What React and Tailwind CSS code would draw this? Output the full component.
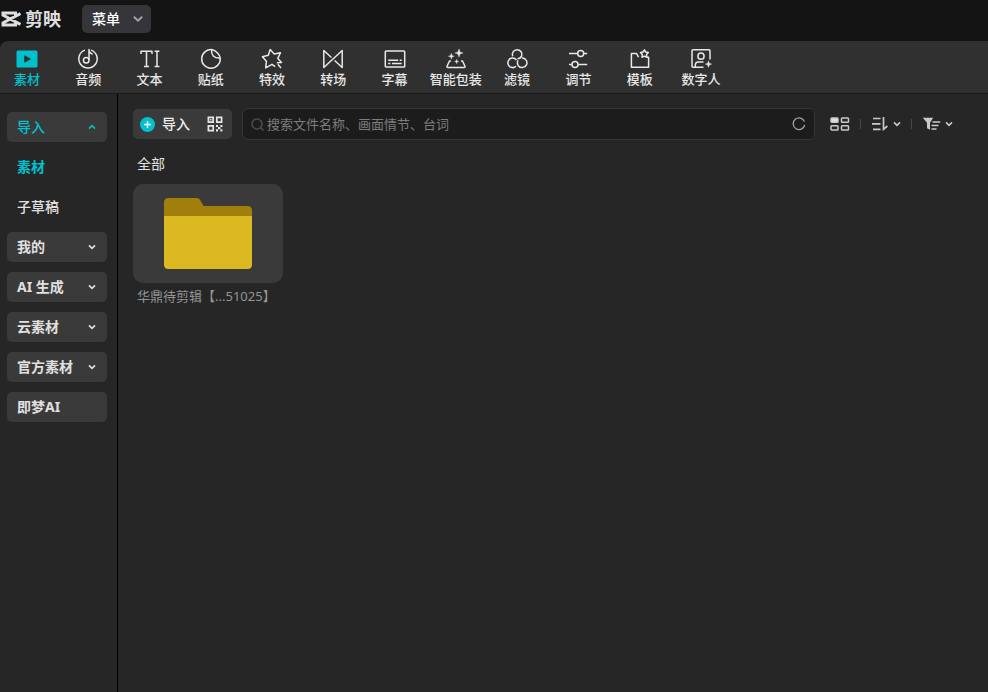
import React from "react";

function Icon({ size = 22, className = "", children }) {
  return (
    <svg
      width={size}
      height={size}
      viewBox={`0 0 ${size} ${size}`}
      fill="none"
      stroke="currentColor"
      strokeWidth="1.5"
      strokeLinejoin="round"
      className={`shrink-0 ${className}`}
      aria-hidden="true"
    >
      {children}
    </svg>
  );
}

function Chevron({ up = false, className = "" }) {
  return (
    <svg width="8" height="6" viewBox="0 0 8 6" fill="none" stroke="currentColor" strokeWidth="1.6" className={`shrink-0 ${className}`} aria-hidden="true">
      <path d={up ? "M1 4.6 4 1.7l3 2.9" : "M1 1.4l3 2.9 3-2.9"} />
    </svg>
  );
}

const TABS = [
  {
    label: "素材",
    active: true,
    icon: (
      <>
        <rect x="0.5" y="2.5" width="21" height="17" rx="1.5" fill="currentColor" stroke="none" />
        <path d="M8.7 7.8v6.4l5.8-3.2z" fill="#303030" stroke="#303030" strokeWidth="0.8" />
      </>
    ),
  },
  {
    label: "音频",
    icon: (
      <>
        <path d="M8 2.1A9.2 9.2 0 1 0 14 2.1" />
        <circle cx="9.2" cy="12.2" r="2.8" />
        <path d="M12 12.2V1.6c0 2.6 1 3.9 3.6 4.6" />
      </>
    ),
  },
  {
    label: "文本",
    icon: (
      <path d="M2 6V3.3h11V6M7.5 3.3v15M5 18.6h5M15.6 3.3h4.8M15.6 18.6h4.8M18 3.3v15.3" />
    ),
  },
  {
    label: "贴纸",
    icon: (
      <>
        <path d="M12.5 1.7A9.3 9.3 0 1 0 20.2 9.8c-.8-3.4-4.3-7.2-7.7-8.1z" />
        <path d="M11.6 1.7c-.6 5 2.2 8.7 8.5 8.4" />
      </>
    ),
  },
  {
    label: "特效",
    icon: (
      <>
        <path d="M14.2 18.6l-3.2-2.3-6.300 3.500.7-6.500-4-4.500 5.900-1.600L9.200 1.600l4 4.300 6.300-1.200-2.700 5.700 3.700 4.100-4.700.2" />
        <path d="M16.800 16.200l3.200 3.800" />
      </>
    ),
  },
  {
    label: "转场",
    icon: (
      <path d="M9.4 9.5 1.8 2.5v17L20.2 2.5v17l-7.6-7" />
    ),
  },
  {
    label: "字幕",
    icon: (
      <>
        <rect x="1.3" y="3" width="19.4" height="16" rx="0.8" />
        <path d="M4.2 12.2h10M15.7 12.2h2M4.2 15.4h2.2M8 15.4h9.7" />
      </>
    ),
  },
  {
    label: "智能包装",
    icon: (
      <>
        <path d="M6 13H4.500L2 18.200c-.3.800.1 1.300.9 1.300h16.200c.8 0 1.200-.5.9-1.300L17.500 13H16" />
        <path d="M14 0.800l1.100 3.100L18.200 5l-3.100 1.100L14 9.200l-1.100-3.100L9.800 5l3.100-1.100zM6.300 5.200l.8 2.200 2.200.8-2.200.8-.8 2.200-.8-2.200-2.200-.8 2.200-.8zM11.700 11.300l.6 1.600 1.600.6-1.600.6-.6 1.600-.6-1.600-1.600-.6 1.600-.6z" fill="currentColor" strokeWidth="0.3" />
      </>
    ),
  },
  {
    label: "滤镜",
    icon: (
      <>
        <path d="M6.700 8.300a4.800 4.800 0 1 1 9-.4c-.9 2-2.300 2.800-4.200 2.900" />
        <path d="M15.900 10a4.800 4.800 0 1 1-3.600 7.700c-1.200-1.900-1.200-3.500-.3-5.300" />
        <path d="M10 18.300a4.800 4.800 0 1 1-4.200-8.200c2.300-.2 3.800.6 4.700 2.100" />
      </>
    ),
  },
  {
    label: "调节",
    icon: (
      <>
        <circle cx="13.7" cy="5.5" r="3" />
        <circle cx="8" cy="16.5" r="3" />
        <path d="M2 5.5h8.7M16.7 5.5h3.5M2 16.5h3M11 16.5h9.2" />
      </>
    ),
  },
  {
    label: "模板",
    icon: (
      <>
        <path d="M9.5 9.2 7.6 5.5H2.4v13.8h17.2V9.2h-2.1" />
        <path d="M15.4 1.8l1.3 2.2 2.6.5-1.8 2 .3 2.7-2.4-1.1L13 9.2l.3-2.7-1.8-2 2.6-.5z" />
      </>
    ),
  },
  {
    label: "数字人",
    icon: (
      <>
        <path d="M20 11.5V2.7c0-.6-.4-1-1-1H3c-.6 0-1 .4-1 1v15.6c0 .6.4 1 1 1h10.5" />
        <circle cx="11" cy="8.2" r="3.1" />
        <path d="M5.3 19v-2.2c.2-1.7 1.2-2.8 2.8-2.8h5.4" />
        <path d="M18.5 12.8l.9 2.4 2.4.9-2.4.9-.9 2.4-.9-2.4-2.4-.9 2.4-.9z" fill="currentColor" strokeWidth="0.3" />
      </>
    ),
  },
];

const GROUPS = [
  { label: "我的", expandable: true },
  { label: "AI 生成", expandable: true },
  { label: "云素材", expandable: true },
  { label: "官方素材", expandable: true },
  { label: "即梦AI", expandable: false },
];

function Header() {
  return (
    <header className="flex h-[41px] shrink-0 items-start gap-[21px] pt-[5px]">
      <div className="flex h-7 items-center gap-1 text-[#dedede]">
        <svg width="21" height="18" viewBox="0 0 21 18" fill="none" stroke="currentColor" strokeWidth="3" className="shrink-0" aria-hidden="true">
          <path d="M20.500 3.600 3 13v2h12.500v-3M20.500 14.400 3 5V3h12.500v3" />
        </svg>
        <span className="text-lg leading-7 font-bold">剪映</span>
      </div>
      <button type="button" className="flex h-7 w-[69px] items-center justify-between rounded-[5px] bg-[#35353a] pr-2 pl-[10px] text-sm font-medium text-white">
        菜单
        <svg width="10" height="6" viewBox="0 0 10 6" fill="none" stroke="#a3a3a5" strokeWidth="1.9" aria-hidden="true">
          <path d="M.8.8 5 4.6 9.2.8" />
        </svg>
      </button>
    </header>
  );
}

function Toolbar() {
  return (
    <nav className="h-[53px] shrink-0 rounded-tl-lg border-b border-[#1a1a1a] bg-[#303030]">
      <div className="flex max-w-[728px] justify-between">
        {TABS.map((tab) => (
          <button
            key={tab.label}
            type="button"
            className={`flex w-[54px] flex-col items-center pt-[7px] text-[13px] leading-[18px] font-medium whitespace-nowrap ${tab.active ? "text-[#00c1cd]" : "text-[#e8e8e8]"}`}
          >
            <Icon>{tab.icon}</Icon>
            <span>{tab.label}</span>
          </button>
        ))}
      </div>
    </nav>
  );
}

function Sidebar() {
  const box = "flex h-[30px] items-center justify-between rounded-[5px] bg-[#3a3a3a] px-[10px] text-left";
  return (
    <aside className="flex w-[118px] shrink-0 flex-col gap-[10px] border-r border-black pt-[18px] pr-[10px] pl-[7px] text-sm font-bold text-[#e0e0e0]">
      <button type="button" aria-expanded="true" className={`${box} font-medium text-[#00c1cd]`}>
        导入
        <Chevron up className="mr-px" />
      </button>
      <button type="button" className="h-[30px] px-[10px] text-left text-[#00c1cd]">素材</button>
      <button type="button" className="h-[30px] px-[10px] text-left font-medium">子草稿</button>
      {GROUPS.map((group) => (
        <button key={group.label} type="button" className={box}>
          {group.label}
          {group.expandable && <Chevron className="mr-px" />}
        </button>
      ))}
    </aside>
  );
}

function QrIcon() {
  return (
    <svg width="16" height="16" viewBox="0 0 16 16" fill="none" stroke="#e6e6e6" strokeWidth="1.7" aria-hidden="true">
      <path d="M1.4 1.4h4.8v4.8H1.4zM9.8 1.4h4.8v4.8H9.8zM1.4 9.8h4.8v4.8H1.4z" />
      <path d="M3.1 3.1h1.4v1.4H3.1zM9 9h2v2H9zM11 11h2.4v2.2H11zM13.4 9h2v2h-2zM9 13.2h2v2.2H9zM13.4 13.2h2v2.2h-2z" fill="#e6e6e6" stroke="none" />
    </svg>
  );
}

function ActionBar() {
  return (
    <div className="flex items-center">
      <div className="flex h-[30px] w-[99px] shrink-0 items-center justify-between rounded-[5px] bg-[#3a3a3a] pr-[9px] pl-[7px]">
        <button type="button" className="flex items-center gap-[7px] text-sm font-medium text-[#ededed]">
          <svg width="15" height="15" viewBox="0 0 15 15" aria-hidden="true">
            <circle cx="7.5" cy="7.5" r="7.5" fill="#00c1cd" />
            <path d="M7.5 4v7M4 7.5h7" stroke="#fff" strokeWidth="1.4" />
          </svg>
          导入
        </button>
        <button type="button" aria-label="二维码">
          <QrIcon />
        </button>
      </div>
      <div className="ml-[10px] flex h-8 min-w-0 flex-1 items-center gap-[3px] rounded-md border border-[#353535] bg-[#1c1c1c] px-2">
        <svg width="13" height="13" viewBox="0 0 13 13" fill="none" stroke="#4b4b4b" strokeWidth="1.6" className="shrink-0" aria-hidden="true">
          <circle cx="6" cy="6" r="5" />
          <path d="M9.5 9.5l3 3" />
        </svg>
        <input
          type="text"
          aria-label="搜索"
          placeholder="搜索文件名称、画面情节、台词"
          className="h-7 min-w-0 flex-1 bg-transparent text-[13px] text-[#e0e0e0] outline-none placeholder:text-[#7c7c7c]"
        />
        <button type="button" aria-label="刷新">
          <svg width="14" height="14" viewBox="0 0 14 14" fill="none" stroke="#a2a2a2" strokeWidth="1.3" className="shrink-0" aria-hidden="true">
            <path d="M12.4 4.5A5.8 5.8 0 1 0 12.7 8" />
          </svg>
        </button>
      </div>
      <div className="ml-[15px] flex shrink-0 items-center text-[#c9c9c9]">
        <button type="button" aria-label="视图">
          <svg width="20" height="14" viewBox="0 0 20 14" fill="none" stroke="currentColor" strokeWidth="1.5" aria-hidden="true">
            <rect x="1" y="1" width="7" height="4.3" rx="0.8" fill="#e0e0e0" />
            <rect x="11.5" y="1" width="7" height="4.3" rx="0.8" />
            <rect x="1" y="8.7" width="7" height="4.3" rx="0.8" />
            <rect x="11.5" y="8.7" width="7" height="4.3" rx="0.8" />
          </svg>
        </button>
        <span className="mx-[10px] h-[10px] w-px bg-[#484848]" />
        <button type="button" aria-label="排序" className="flex items-center gap-1">
          <svg width="18" height="14" viewBox="0 0 18 14" fill="none" stroke="currentColor" strokeWidth="1.7" aria-hidden="true">
            <path d="M2 1.5h7.5M1 6.8h8.5M2 12.3h7.5M12.5 0v12.3L16.4 9" />
          </svg>
          <Chevron />
        </button>
        <span className="mx-[10px] h-[10px] w-px bg-[#484848]" />
        <button type="button" aria-label="筛选" className="flex items-center gap-1">
          <svg width="19" height="14" viewBox="0 0 19 14" fill="none" stroke="currentColor" strokeWidth="1.7" aria-hidden="true">
            <path d="M.8.8h10.4L8 5.8v7L5 11.2V5.8z" fill="currentColor" stroke="none" />
            <path d="M10.5 5h7.7M9.5 8.5h7M9.5 12h5" />
          </svg>
          <Chevron />
        </button>
      </div>
    </div>
  );
}

function FolderCard({ name }) {
  return (
    <button type="button" className="flex w-[150px] flex-col items-start text-left">
      <span className="flex h-[99px] w-full items-center justify-center rounded-[10px] bg-[#3a3a3a]">
        <svg width="88" height="71" viewBox="0 0 88 71" aria-hidden="true">
          <path d="M0 20V4.5Q0 0 4.5 0H33q1.800 0 2.800 1.500L39.500 8H83.500q4.500 0 4.500 4.500V20z" fill="#a17f0d" />
          <path d="M0 18h88v48.500q0 4.500-4.500 4.500h-79Q0 71 0 66.500z" fill="#dcb822" />
        </svg>
      </span>
      <span className="pt-[3px] pl-1 text-[13px] leading-5 text-[#949494]">{name}</span>
    </button>
  );
}

export default function App() {
  return (
    <div className="flex min-h-screen flex-col bg-[#141414] font-['Noto_Sans','Noto_Sans_CJK_SC',sans-serif]">
      <Header />
      <Toolbar />
      <div className="flex flex-1 bg-[#262626]">
        <Sidebar />
        <main className="min-w-0 flex-1 pt-[14px] pr-[35px] pl-[15px]">
          <ActionBar />
          <h2 className="mt-[14px] mb-[10px] pl-1 text-sm leading-5 text-[#e2e2e2]">全部</h2>
          <FolderCard name="华鼎待剪辑【...51025】" />
        </main>
      </div>
    </div>
  );
}
